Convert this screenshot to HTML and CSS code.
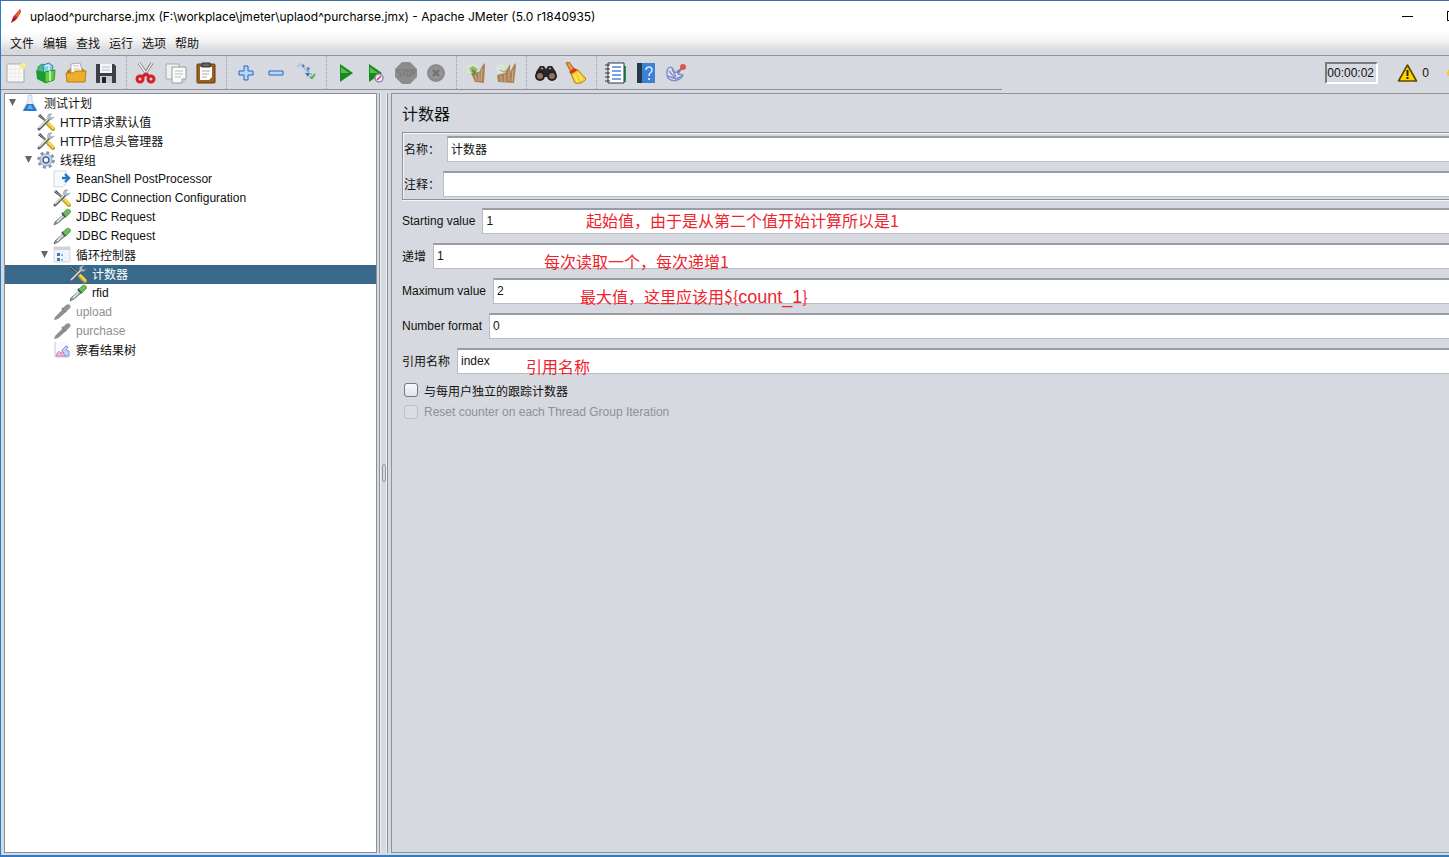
FILE: index.html
```html
<!DOCTYPE html>
<html lang="zh-CN">
<head>
    <meta charset="UTF-8">
    <meta name="viewport" content="width=device-width, initial-scale=1.0">
    <title>Apache JMeter (5.0 r1840935)</title>
    <link rel="stylesheet" href="styles.css">
</head>
<body>
    <!-- shared icons -->
    <svg class="defs" aria-hidden="true">
        <symbol id="tools" viewBox="0 0 18 18">
            <path d="M1 3l2-2 8 8-1 1z" fill="#34373a"/>
            <path d="M2 2l8 7" stroke="#ddd" stroke-width=".8"/>
            <path d="M11 11l5 5" stroke="#c9a02a" stroke-width="4" stroke-linecap="round"/>
            <path d="M11 10l5 5" stroke="#f3d84c" stroke-width="2.4" stroke-linecap="round"/>
            <path d="M2 16L12 6" stroke="#5d6266" stroke-width="3" stroke-linecap="round"/>
            <path d="M2 15L12 5" stroke="#dfe3e6" stroke-width="1.4"/>
            <path d="M12 1c-2 2-2 4 0 5s4 0 5-2l-2 1-2-1v-2l2-1z" fill="#b5c3cd" stroke="#8293a0" stroke-width=".6"/>
        </symbol>
        <symbol id="dropper" viewBox="0 0 18 18">
            <path d="M1 17l1-3 8-7 2 2-7 6z" fill="#9aa09e" stroke="#5c6461" stroke-width=".8"/>
            <path d="M4 14l6-6" stroke="#eef3f2" stroke-width="1.2"/>
            <path d="M9 5l4 4" stroke="#28502c" stroke-width="2"/>
            <path d="M10 5l3-3c2-2 6 0 4 3l-4 4z" fill="#6fb766" stroke="#559a50" stroke-width=".8"/>
        </symbol>
        <symbol id="dropper-off" viewBox="0 0 18 18">
            <path d="M1 17l1-3 8-8 3 3-8 7z" fill="#8f8f8f"/>
            <path d="M9 5l4 4" stroke="#858585" stroke-width="2"/>
            <path d="M10 5l3-3c2-2 6 0 4 3l-4 4z" fill="#939393"/>
        </symbol>
        <symbol id="warning" viewBox="0 0 20 20">
            <path d="M10 2l9 16H1z" fill="#ffd400" stroke="#5c4a00" stroke-width="1.6" stroke-linejoin="round"/>
            <path d="M10 7v6M10 14v2" stroke="#2c2400" stroke-width="2"/>
        </symbol>
    </svg>

    <div class="window">
        <header class="titlebar">
            <svg class="logo" viewBox="0 0 16 16"><path d="M3 15l2-6 7-8 1 3-5 8z" fill="#c4232b"/><path d="M7 8l5-7 1 3-3 5z" fill="#e8622c"/><path d="M3 15l3-5 1 1z" fill="#4d1d5e"/></svg>
            <span>uplaod^purcharse.jmx (F:\workplace\jmeter\uplaod^purcharse.jmx) - Apache JMeter (5.0 r1840935)</span>
            <div class="window-buttons">
                <button class="minimize" aria-label="最小化"></button>
                <button class="maximize" aria-label="最大化"></button>
            </div>
        </header>

        <nav class="menubar">
            <a href="#">文件</a>
            <a href="#">编辑</a>
            <a href="#">查找</a>
            <a href="#">运行</a>
            <a href="#">选项</a>
            <a href="#">帮助</a>
        </nav>

        <div class="toolbar">
            <div class="tools">
                <button aria-label="新建"><svg viewBox="0 0 22 22"><path d="M2 2h17v18H2z" fill="#fafafa" stroke="#aaa"/><path d="M6 3v16M10 3v16M14 3v16M3 7h15M3 11h15M3 15h15" stroke="#ececec"/><circle cx="18" cy="4" r="3" fill="#f5ee8c"/></svg></button>
                <button aria-label="模板"><svg viewBox="0 0 22 22"><path d="M3 5l4-3 5 2-1 11-8-2z" fill="#4dbb83" stroke="#2a8e60"/><path d="M8 3l6-2 4 3-2 9-7 1z" fill="#84cfe8" stroke="#2f89aa"/><path d="M10 4l4-1v6" stroke="#fff" fill="none"/><path d="M1 8l9 2 0 11-8-4z" fill="#1d9a35"/><path d="M10 10l10-2-1 10-9 3z" fill="#5fce43" stroke="#239427"/><path d="M15 9v10" stroke="#b8f29d" stroke-width="2"/></svg></button>
                <button aria-label="打开"><svg viewBox="0 0 22 22"><path d="M2 9l4-3h11l3 3v10H2z" fill="#b57d13"/><path d="M6 2l9-1 3 11H6z" fill="#fff" stroke="#aaa"/><path d="M8 4h6M8 7h7" stroke="#bbb"/><path d="M1 11h7l2-2h11l-1 11H2z" fill="#edae2e" stroke="#bb7c10"/></svg></button>
                <button aria-label="保存"><svg viewBox="0 0 22 22"><path d="M1 2h18l2 2v17H1z" fill="#3c4045"/><path d="M5 2h12v9H5z" fill="#f3f7fb"/><path d="M7 5h8M7 8h8" stroke="#afbdc8"/><path d="M5 14h12v7H5z" fill="#c7cacd"/><path d="M7 15h4v6H7z" fill="#222"/></svg></button>
                <span class="separator"></span>
                <button aria-label="剪切"><svg viewBox="0 0 22 22"><path d="M4 1l10 14M17 1L8 15" stroke="#777" stroke-width="3"/><path d="M4 1l9 13M17 1L9 14" stroke="#f5f5f5" stroke-width="1.4"/><circle cx="5" cy="17" r="3" fill="none" stroke="#d81f26" stroke-width="3"/><circle cx="16" cy="17" r="3" fill="none" stroke="#d81f26" stroke-width="3"/><path d="M7 15l4-3 4 3" stroke="#d81f26" stroke-width="3" fill="none"/></svg></button>
                <button aria-label="复制"><svg viewBox="0 0 22 22"><path d="M1 2h13v15H1z" fill="#f0f2f2" stroke="#aaa"/><path d="M7 5h14v12l-4 4H7z" fill="#fbfbfb" stroke="#999"/><path d="M10 9h8M10 12h8M10 15h6" stroke="#b8bbbc"/><path d="M17 21v-4h4" fill="#ddd" stroke="#999"/></svg></button>
                <button aria-label="粘贴"><svg viewBox="0 0 22 22"><rect x="2" y="2" width="18" height="19" rx="1" fill="#9b621c" stroke="#603b0d"/><path d="M5 5h12v10l-3 3H5z" fill="#fff"/><path d="M7 9h8M7 12h7M7 15h5" stroke="#aaa"/><path d="M7 1h8v4H7z" fill="#666" stroke="#333"/></svg></button>
                <span class="separator"></span>
                <button aria-label="展开"><svg viewBox="0 0 22 22"><path d="M9 4h4v5h5v4h-5v5H9v-5H4V9h5z" fill="#b5d8fa" stroke="#2867bd"/></svg></button>
                <button aria-label="收起"><svg viewBox="0 0 22 22"><path d="M4 9h14v4H4z" fill="#b5d8fa" stroke="#2867bd"/></svg></button>
                <button aria-label="切换"><svg viewBox="0 0 22 22"><path d="M2 5l4-3 8 9" fill="none" stroke="#bbc2c5" stroke-width="2"/><path d="M7 4l5 4M12 8l5 5" stroke="#8ba9d8" stroke-width="1.5" stroke-dasharray="3 2"/><path d="M7 5l1-3 2 2zM10 11l5 0-2 4zM12 5l3 1-2 3z" fill="#3273cb"/><path d="M15 15l2 1 3-4" stroke="#5ba85a" stroke-width="2" fill="none"/></svg></button>
                <span class="separator"></span>
                <button aria-label="启动"><svg viewBox="0 0 22 22"><path d="M5 2l13 9-13 9z" fill="#168a20"/><path d="M6 5l8 6H6z" fill="#55c34b"/></svg></button>
                <button aria-label="不停顿开始"><svg viewBox="0 0 22 22"><path d="M4 2l13 9-13 9z" fill="#168a20"/><path d="M5 5l8 6H5z" fill="#55c34b"/><circle cx="14" cy="16" r="4" fill="#eef2ff" stroke="#8a86ae" stroke-width="1.4"/><path d="M12 18l4-4" stroke="#dc3434" stroke-width="1.5"/></svg></button>
                <button aria-label="停止" disabled><svg viewBox="0 0 22 22"><path d="M7 0h8l7 7v8l-7 7H7l-7-7V7z" fill="#8c8c8c"/><path d="M3 8h3M3 8v3h3v3H3M7 8h4M9 8v6M12 8h3v6h-3zM17 14V8h3v3h-3" fill="none" stroke="#777"/></svg></button>
                <button aria-label="关闭" disabled><svg viewBox="0 0 22 22"><circle cx="11" cy="11" r="9" fill="#8c8c8c"/><circle cx="11" cy="11" r="6" fill="#969696"/><path d="M8 8l6 6M14 8l-6 6" stroke="#747474" stroke-width="2.5"/></svg></button>
                <span class="separator"></span>
                <button aria-label="清除"><svg viewBox="0 0 22 22"><path d="M0 4l7-2 7 2-1 5-5 4-6-2z" fill="#dbe5ce"/><path d="M4 6l4-2 5 3-3 5-4-2z" fill="#97bb77"/><path d="M6 11l8-1 5-9 1 2-1 18-9-1z" fill="#a98257"/><path d="M10 13l2 6M14 11v8M17 7l-1 12" stroke="#d4b28b"/><path d="M7 8l3 2-2 3" stroke="#4f963a" fill="none" stroke-width="2"/></svg></button>
                <button aria-label="清除全部"><svg viewBox="0 0 22 22"><path d="M0 5l5-3 6 2-1 6-6 2z" fill="#dde4d5"/><path d="M9 3l6-1 1 7-6 2z" fill="#d6dfc8"/><path d="M2 13l8-2 5-9v8l5-9 1 2-2 18-16-1z" fill="#a98257"/><path d="M6 14v6M10 12v8M14 9v10M18 8l-1 12" stroke="#d4b28b"/><path d="M5 8l4 2 4-3" stroke="#83a665" fill="none"/></svg></button>
                <span class="separator"></span>
                <button aria-label="查找"><svg viewBox="0 0 22 22"><path d="M1 10l4-6h4l2 3 2-3h4l4 6v5H1z" fill="#282828"/><circle cx="5" cy="14" r="5" fill="#222"/><circle cx="17" cy="14" r="5" fill="#222"/><circle cx="5" cy="14" r="3" fill="#987055"/><circle cx="17" cy="14" r="3" fill="#987055"/><path d="M6 6l2 1M14 6l2 1" stroke="#999" stroke-width="1.5"/></svg></button>
                <button aria-label="重置查找"><svg viewBox="0 0 22 22"><path d="M1 1l3-1 6 8-4 2z" fill="#e8a12e" stroke="#9d6215"/><path d="M4 10l5-4 4 2-6 5z" fill="#d83227"/><path d="M6 12l7-4 8 9c-3 4-7 5-11 4z" fill="#f7d42d" stroke="#b37d10"/><path d="M10 13l2 7M13 11l4 7" stroke="#fff29b"/></svg></button>
                <span class="separator"></span>
                <button aria-label="函数助手"><svg viewBox="0 0 22 22"><path d="M18 4h3v16h-3z" fill="#239650"/><path d="M3 1h16v20H3z" fill="#fff" stroke="#26374b"/><path d="M7 5h9M7 9h9M7 13h9M7 17h9" stroke="#4d85d6" stroke-width="1.6"/><path d="M0 3h5M0 7h5M0 11h5M0 15h5M0 19h5" stroke="#333"/></svg></button>
                <button aria-label="帮助"><svg viewBox="0 0 22 22"><path d="M2 1h18v20H2z" fill="#3b82d6"/><path d="M2 1h5v20H2z" fill="#27384c"/><path d="M11 8c0-4 6-4 6 0 0 3-3 2-3 6" fill="none" stroke="#d5eaff" stroke-width="1.5"/><circle cx="14" cy="17" r="1" fill="#fff"/></svg></button>
                <button aria-label="撤销"><svg viewBox="0 0 22 22"><path d="M2 9c1-4 4-5 6-2l2 4 7-5-4 6 5 1c-2 5-10 8-15 3l-1-3z" fill="#dfe5f6" stroke="#7c8fc9" stroke-width="1.4"/><path d="M4 9l6 7M7 7l4 8M3 14l8 3 6-3" fill="none" stroke="#7c8fc9" stroke-width="1.4"/><path d="M12 11l5-5" stroke="#a55377"/><circle cx="18" cy="5" r="3" fill="#df5548"/></svg></button>
            </div>
            <div class="status">
                <input class="timer" type="text" value="00:00:02" aria-label="运行时间" readonly>
                <button class="warnings"><svg><use href="#warning"/></svg>0</button>
                <svg class="threads" viewBox="0 0 20 20"><circle cx="6" cy="10" r="6" fill="#f1cb32"/></svg>
            </div>
        </div>

        <main class="content">
            <ul class="tree">
                <li class="level-0"><button class="arrow" aria-label="收起"></button><svg viewBox="0 0 18 18"><path d="M7 1h4v6l5 9H2l5-9z" fill="#e8eff7" stroke="#b3bdca" stroke-width=".7"/><path d="M6 10h6l4 7H2z" fill="#2879c9"/><path d="M8 11h2l2 4H6z" fill="#65b0ec"/></svg>测试计划</li>
                <li class="level-1"><svg><use href="#tools"/></svg>HTTP请求默认值</li>
                <li class="level-1"><svg><use href="#tools"/></svg>HTTP信息头管理器</li>
                <li class="level-1"><button class="arrow" aria-label="收起"></button><svg viewBox="0 0 18 18"><circle cx="9" cy="9" r="7.5" fill="none" stroke="#8093a8" stroke-width="2.5" stroke-dasharray="3 2.9"/><circle cx="9" cy="9" r="6" fill="#d3deea" stroke="#8a9db1"/><circle cx="9" cy="9" r="3" fill="#f3f7fc" stroke="#3f68a5" stroke-width="1.5"/></svg>线程组</li>
                <li class="level-2"><svg viewBox="0 0 18 18"><path d="M1 1h12v13l-3 3H1z" fill="#f7f8fb" stroke="#d5d8dd"/><path d="M9 8h7M12 4l4 4-4 4" fill="none" stroke="#2374cc" stroke-width="2.4"/></svg>BeanShell PostProcessor</li>
                <li class="level-2"><svg><use href="#tools"/></svg>JDBC Connection Configuration</li>
                <li class="level-2"><svg><use href="#dropper"/></svg>JDBC Request</li>
                <li class="level-2"><svg><use href="#dropper"/></svg>JDBC Request</li>
                <li class="level-2"><button class="arrow" aria-label="收起"></button><svg viewBox="0 0 18 18"><path d="M1 1h16v15H1z" fill="#edf4fc" stroke="#d3d8df"/><path d="M1 1h16v3H1z" fill="#d0d2d7"/><path d="M4 7h3v3H4zM4 12h3v3H4z" fill="#3d77b6"/><path d="M8 9h2M8 14h2" stroke="#3d77b6"/></svg>循环控制器</li>
                <li class="level-3 selected"><svg><use href="#tools"/></svg>计数器</li>
                <li class="level-3"><svg><use href="#dropper"/></svg>rfid</li>
                <li class="level-2 disabled"><svg><use href="#dropper-off"/></svg>upload</li>
                <li class="level-2 disabled"><svg><use href="#dropper-off"/></svg>purchase</li>
                <li class="level-2"><svg viewBox="0 0 18 18"><path d="M2 1h14v15H2z" fill="#fafafd"/><path d="M2 1v15h14" fill="none" stroke="#c8c8d4"/><path d="M3 15c2-6 4-5 5-2l2-4 4 6z" fill="#f2c0dc" stroke="#d376ac"/><path d="M9 9l4-4 2 1-2 3 3 1v5h-4z" fill="#c4d3f7" stroke="#7998df"/></svg>察看结果树</li>
            </ul>

            <div class="divider"><span class="grip"></span></div>

            <form class="panel">
                <h1>计数器</h1>
                <div class="name-box">
                    <div class="field name-field">
                        <label for="name">名称：</label>
                        <input type="text" id="name" value="计数器">
                    </div>
                    <div class="field">
                        <label for="comment">注释：</label>
                        <input type="text" id="comment">
                    </div>
                </div>
                <div class="field">
                    <label for="start">Starting value</label>
                    <input type="text" id="start" value="1">
                    <span class="note note-start">起始值，由于是从第二个值开始计算所以是1</span>
                </div>
                <div class="field">
                    <label for="increment">递增</label>
                    <input type="text" id="increment" value="1">
                    <span class="note note-increment">每次读取一个，每次递增1</span>
                </div>
                <div class="field">
                    <label for="max">Maximum value</label>
                    <input type="text" id="max" value="2">
                    <span class="note note-max">最大值，这里应该用${<b>count_1</b>}</span>
                </div>
                <div class="field">
                    <label for="format">Number format</label>
                    <input type="text" id="format" value="0">
                </div>
                <div class="field">
                    <label for="reference">引用名称</label>
                    <input type="text" id="reference" value="index">
                    <span class="note note-reference">引用名称</span>
                </div>
                <div class="checks">
                    <div class="check">
                        <input type="checkbox" id="perUser">
                        <label for="perUser">与每用户独立的跟踪计数器</label>
                    </div>
                    <div class="check">
                        <input type="checkbox" id="reset" disabled>
                        <label for="reset">Reset counter on each Thread Group Iteration</label>
                    </div>
                </div>
            </form>
        </main>
    </div>
</body>
</html>
```

FILE: styles.css
```css
* {
    box-sizing: border-box;
}

body {
    margin: 0;
    font-family: "Liberation Sans", "Noto Sans CJK SC", sans-serif;
    font-size: 12px;
    color: #111;
}

button, input {
    font: inherit;
    color: inherit;
}

button {
    padding: 0;
    border: none;
    background: none;
}

.defs {
    position: absolute;
    width: 0;
    height: 0;
}

.window {
    display: flex;
    flex-direction: column;
    height: 100vh;
    overflow: hidden;
    background-color: #d6d9df;
    border-top: 1px solid #3c71a7;
    border-left: 1px solid #2a7cc7;
    border-bottom: 2px solid #2a7cc7;
}

/* Title bar */
.titlebar {
    display: flex;
    align-items: center;
    height: 30px;
    padding-left: 7px;
    gap: 6px;
    background-color: #fff;
    font-family: Inter, "Noto Sans CJK SC", sans-serif;
    color: #000;
}

.logo {
    width: 16px;
    height: 16px;
}

.window-buttons {
    display: flex;
    align-items: center;
    gap: 34px;
    margin-left: auto;
    margin-right: -8px;
}

.minimize {
    width: 11px;
    height: 1px;
    background-color: #000;
}

.maximize {
    width: 10px;
    height: 10px;
    border: 1px solid #000;
}

/* Menu */
.menubar {
    display: flex;
    align-items: center;
    gap: 9px;
    height: 25px;
    padding: 0 0 2px 9px;
    background: linear-gradient(#fff, #f3f3f4 40%, #d8dadd 80%, #d6d9df);
    border-bottom: 1px solid #8f929c;
}

.menubar a {
    color: #111;
    text-decoration: none;
}

/* Toolbar */
.toolbar {
    display: flex;
    justify-content: space-between;
    height: 37px;
}

.tools {
    display: flex;
    flex: 0 1 1001px;
    height: 34px;
    border-bottom: 1px solid #8f929c;
}

.tools button {
    display: flex;
    align-items: center;
    justify-content: center;
    width: 30px;
}

.tools svg {
    width: 22px;
    height: 22px;
    fill: none;
}

.separator {
    width: 6px;
    margin-right: 4px;
    border-right: 1px dotted #9a9da6;
}

.status {
    display: flex;
    align-items: center;
    height: 34px;
    margin-right: -11px;
}

.timer {
    width: 53px;
    height: 22px;
    padding: 0;
    border: 2px solid;
    border-color: #777b82 #fff #fff #777b82;
    border-radius: 0;
    background-color: #d6d9df;
}

.warnings {
    display: flex;
    align-items: center;
    gap: 4px;
    margin: 0 18px 0 19px;
}

.warnings svg {
    width: 21px;
    height: 20px;
}

.threads {
    width: 13px;
    height: 20px;
}

/* Content */
.content {
    display: flex;
    flex: 1;
    min-height: 0;
    padding: 0 0 2px 3px;
}

.tree {
    flex: 0 0 373px;
    margin: 0 2px 0 0;
    padding: 0;
    list-style: none;
    background-color: #fff;
    border: 1px solid #8b8e98;
}

.tree li {
    display: flex;
    align-items: center;
    gap: 5px;
    height: 19px;
    padding-bottom: 2px;
    white-space: nowrap;
}

.tree svg {
    flex: none;
    width: 18px;
    height: 18px;
    fill: none;
}

.level-0 { padding-left: 16px; }
.level-1 { padding-left: 32px; }
.level-2 { padding-left: 48px; }
.level-3 { padding-left: 64px; }

.arrow {
    width: 7px;
    height: 7px;
    margin-left: -12px;
    background-color: #666;
    clip-path: polygon(0 0, 100% 0, 50% 100%);
}

.tree .selected {
    background-color: #39698a;
    color: #fff;
}

.tree .disabled {
    color: #8e8f93;
}

.divider {
    display: flex;
    align-items: center;
    justify-content: center;
    flex: 0 0 9px;
    margin-right: 3px;
    border: solid #8f929c;
    border-width: 0 1px;
    box-shadow: inset 1px 0 #eef0f4, inset -1px 0 #eef0f4;
}

.grip {
    width: 4px;
    height: 18px;
    border: 1px solid #9698a2;
    border-radius: 2px;
}

/* Counter form */
.panel {
    flex: 1;
    min-width: 0;
    padding: 9px 0 0 10px;
    border: solid #8f929c;
    border-width: 1px 0 1px 1px;
}

.panel h1 {
    margin: 0 0 5px;
    font-size: 16px;
    line-height: 24px;
    font-weight: normal;
}

.name-box {
    display: flex;
    flex-direction: column;
    gap: 9px;
    padding: 3px 0 2px 1px;
    margin-bottom: 8px;
    border: solid #8f929c;
    border-width: 1px 0 1px 1px;
    box-shadow: inset 1px 1px #f4f5f7, 0 1px #f4f5f7;
}

.field {
    position: relative;
    display: flex;
    align-items: center;
    gap: 7px;
    height: 26px;
    margin-bottom: 9px;
}

.name-box .field {
    gap: 3px;
    margin-bottom: 0;
}

.name-box .name-field {
    gap: 7px;
}

.field label {
    padding-bottom: 1px;
    white-space: nowrap;
}

.field input {
    flex: 1;
    min-width: 0;
    height: 26px;
    padding: 0 3px 2px;
    background-color: #fff;
    border: 1px solid #b9bcc4;
    border-top: 2px solid #999ca4;
    border-right: none;
    border-radius: 0;
}

/* Red remarks lie over the inputs */
.note {
    position: absolute;
    top: 0;
    font-size: 16px;
    line-height: 24px;
    font-family: "Noto Sans CJK SC", sans-serif;
    color: #f0222c;
    white-space: nowrap;
}

.note b {
    font-family: "Liberation Sans", sans-serif;
    font-size: 18px;
    font-weight: normal;
}

.note-start { left: 184px; }
.note-increment { left: 142px; top: 6px; }
.note-max { left: 178px; top: 6px; }
.note-reference { left: 124px; top: 6px; }

.checks {
    margin-top: -4px;
}

.check {
    display: flex;
    align-items: center;
    gap: 6px;
    height: 22px;
    padding-left: 2px;
}

.check input {
    appearance: none;
    width: 14px;
    height: 14px;
    margin: 0;
    border: 1px solid #74777f;
    border-radius: 3px;
    background: linear-gradient(#fafafb, #dfe2e7);
}

.check input:disabled {
    border-color: #bcc0c8;
    background: #d9dce2;
}

.check input:disabled + label {
    color: #8e9197;
}
```
